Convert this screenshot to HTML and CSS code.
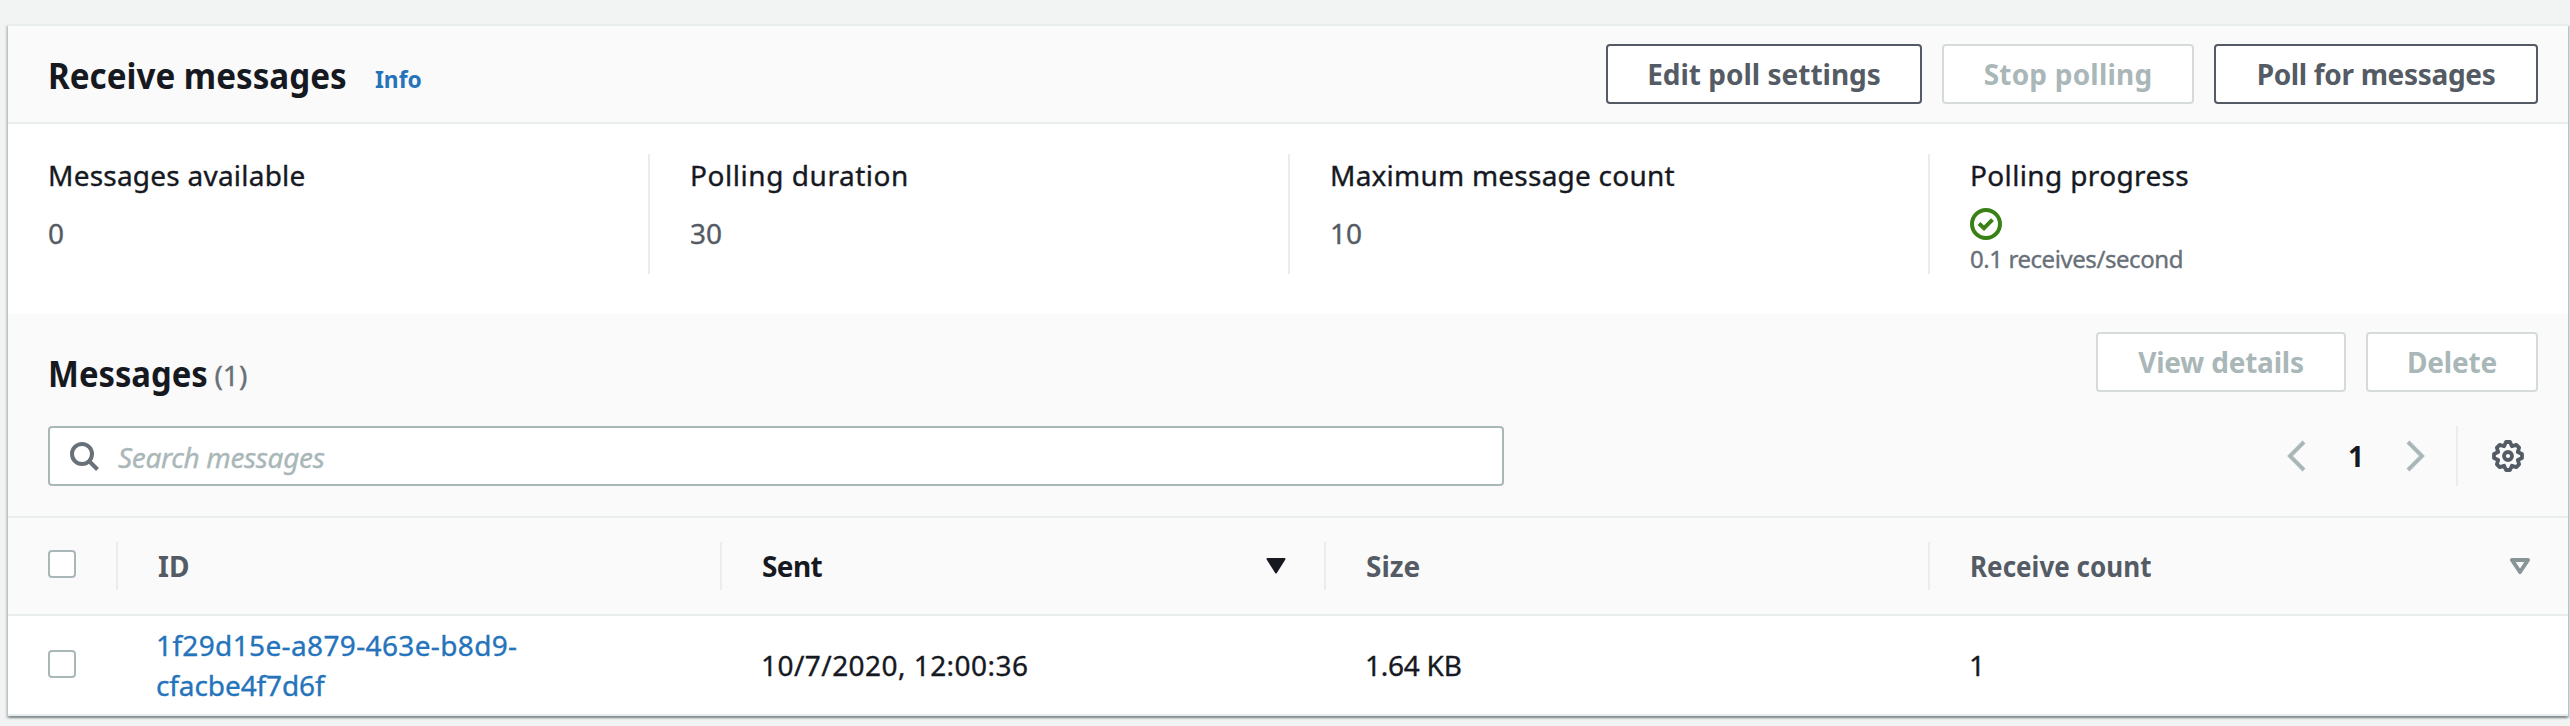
FILE: index.html
```
<!DOCTYPE html>
<html lang="en">
<head>
<meta charset="utf-8">
<title>Receive messages</title>
<link rel="stylesheet" href="styles.css">
</head>
<body>
<main class="card">
  <header class="card-header">
    <h2 class="title"><span class="t t-receive">Receive messages</span></h2>
    <a class="info"><span class="t t-info">Info</span></a>
    <div class="actions">
      <button class="btn btn-edit"><span class="t t-edit">Edit poll settings</span></button>
      <button class="btn btn-stop" disabled><span class="t t-stop">Stop polling</span></button>
      <button class="btn btn-poll"><span class="t t-poll">Poll for messages</span></button>
    </div>
  </header>
  <section class="stats">
    <div class="stat"><div class="label"><span class="t t-avail">Messages available</span></div><div class="value"><span class="t">0</span></div></div>
    <div class="stat"><div class="label"><span class="t t-dur">Polling duration</span></div><div class="value"><span class="t">30</span></div></div>
    <div class="stat"><div class="label"><span class="t t-max">Maximum message count</span></div><div class="value"><span class="t">10</span></div></div>
    <div class="stat"><div class="label"><span class="t t-prog">Polling progress</span></div>
      <svg class="ok" viewBox="0 0 32 32"><circle cx="16" cy="16" r="14" /><path d="M9 15.500l5 4.700 8.500-8.500" /></svg>
      <div class="rate"><span class="t t-rate">0.1 receives/second</span></div>
    </div>
  </section>
  <section class="tools">
    <div class="row">
      <h2 class="title"><span class="t t-messages">Messages</span></h2>
      <span class="count">(1)</span>
      <div class="actions">
        <button class="btn btn-view" disabled><span class="t t-view">View details</span></button>
        <button class="btn btn-delete" disabled><span class="t t-delete">Delete</span></button>
      </div>
    </div>
    <div class="row row-search">
      <div class="search">
        <svg class="glass" viewBox="0 0 32 32"><circle cx="12" cy="14" r="10" /><path d="M19 21l8.500 8.500" /></svg>
        <span class="t t-search">Search messages</span>
      </div>
      <div class="pager">
        <svg class="chev" viewBox="0 0 20 32"><path d="M18 2L4 16l14 14" /></svg>
        <span class="page">1</span>
        <svg class="chev" viewBox="0 0 20 32"><path d="M2 2l14 14L2 30" /></svg>
      </div>
      <div class="prefs">
        <svg class="gear" viewBox="0 0 32 32"><path d="M14 2h4L19.900 6.200 24.300 4.900 27.100 7.700 25.800 12.100 30 14v4L25.800 19.900 27.100 24.300 24.300 27.100 19.900 25.800 18 30h-4L12.100 25.800 7.700 27.100 4.900 24.300 6.200 19.900 2 18v-4L6.200 12.100 4.900 7.700 7.700 4.900 12.100 6.200z" /><circle cx="16" cy="16" r="4" /></svg>
      </div>
    </div>
  </section>
  <section class="grid head">
    <div class="cell pick"><span class="box"></span></div>
    <div class="cell"><span class="t t-id">ID</span></div>
    <div class="cell sorted"><span class="t t-sent">Sent</span><svg class="tri" viewBox="0 0 20 16"><path class="solid" d="M1.500 1h17L10 14.500z" /></svg></div>
    <div class="cell"><span class="t t-size">Size</span></div>
    <div class="cell"><span class="t t-count">Receive count</span><svg class="tri" viewBox="0 0 20 16"><path class="hollow" d="M2 2h16l-8 12z" /></svg></div>
  </section>
  <section class="grid body">
    <div class="cell pick"><span class="box"></span></div>
    <div class="cell"><a class="link"><span class="t t-id1">1f29d15e-a879-463e-b8d9-</span><br><span class="t t-id2">cfacbe4f7d6f</span></a></div>
    <div class="cell"><span class="t t-date">10/7/2020, 12:00:36</span></div>
    <div class="cell"><span class="t t-kb">1.64 KB</span></div>
    <div class="cell"><span class="t">1</span></div>
  </section>
</main>
</body>
</html>
```
FILE: styles.css
```
* { box-sizing: border-box; }
body {
  margin: 0;
  height: 726px;
  padding: 24px 2px 0 8px;
  overflow: hidden;
  background: #f2f3f3;
  color: #16191f;
  font: 28px/40px "Noto Sans", sans-serif;
}
.t { display: inline-block; white-space: nowrap; transform-origin: 0 50%; }
.label, .value, .rate, .count, .search, .body { -webkit-text-stroke: .35px currentColor; }
.t-receive { transform: scaleX(.922); margin-right: -23px; }
.t-messages { transform: scaleX(.91); margin-right: -16px; }
.t-info { transform: scaleX(.95); }
.t-count { transform: scaleX(.93); }
.t-avail, .t-max { letter-spacing: .23px; }
.t-dur { letter-spacing: .55px; }
.t-prog { letter-spacing: .36px; }
.t-rate { letter-spacing: -.43px; }
.t-stop { letter-spacing: .2px; }
.t-poll { letter-spacing: -.33px; }
.t-view { letter-spacing: -.2px; }
.t-delete { letter-spacing: -.2px; }
.t-sent { letter-spacing: -.6px; }
.t-id1 { letter-spacing: .36px; }
.t-id2 { letter-spacing: -.1px; }
.t-date { letter-spacing: .45px; }
.t-kb { letter-spacing: -.25px; }
.card {
  height: 692px;
  border-top: 2px solid #eaeded;
  border-bottom: 2px solid #eaeded;
  background: #fff;
  box-shadow: 0 2px 2px rgba(0, 28, 36, .3), 2px 2px 2px rgba(0, 28, 36, .15), -2px 2px 2px rgba(0, 28, 36, .15);
}
.card-header {
  display: flex;
  align-items: center;
  height: 98px;
  padding: 0 30px 0 40px;
  background: #fafafa;
  border-bottom: 2px solid #eaeded;
}
.title { margin: 3px 0 0; font-size: 36px; line-height: 44px; font-weight: 700; }
.info { margin: 10px 0 0 26px; font-size: 24px; line-height: 36px; font-weight: 700; color: #2574bb; }
.actions { display: flex; gap: 20px; margin-left: auto; }
.btn {
  display: flex;
  align-items: center;
  justify-content: center;
  height: 60px;
  padding: 0;
  border: 2px solid #545b64;
  border-radius: 4px;
  background: #fff;
  color: #545b64;
  font: 700 28px/40px "Noto Sans", sans-serif;
}
.btn:disabled { border-color: #d5dbdb; color: #aab7b8; }
.btn-edit { width: 316px; }
.btn-stop { width: 252px; }
.btn-poll { width: 324px; }
.btn-view { width: 250px; }
.btn-delete { width: 172px; }
.stats { display: grid; grid-template-columns: repeat(4, 640px); height: 190px; padding-top: 30px; }
.stat { height: 120px; padding: 1px 40px 0; }
.stat + .stat { border-left: 2px solid #eaeded; }
.value { margin-top: 18px; color: #545b64; }
.ok { display: block; width: 32px; height: 32px; margin-top: 13px; fill: none; stroke: #3a8016; stroke-width: 4; }
.rate { margin-top: 3px; font-size: 24px; line-height: 32px; color: #687078; }
.tools { height: 204px; padding: 18px 30px 0 40px; background: #fafafa; border-bottom: 2px solid #eaeded; }
.row { display: flex; align-items: center; height: 60px; }
.row .title { margin-top: 23px; }
.count { margin: 25px 0 0 7px; color: #687078; }
.row-search { margin-top: 34px; }
.search {
  display: flex;
  align-items: center;
  width: 1456px;
  height: 60px;
  padding-left: 20px;
  border: 2px solid #aab7b8;
  border-radius: 4px;
  background: #fff;
  color: #aab7b8;
  font-style: italic;
}
.t-search { margin-top: 2px; letter-spacing: -.35px; }
.glass { width: 32px; height: 32px; margin-right: 16px; fill: none; stroke: #687078; stroke-width: 4; }
.pager { display: flex; align-items: center; justify-content: space-between; width: 140px; margin-left: auto; }
.chev { width: 20px; height: 32px; fill: none; stroke: #aab7b8; stroke-width: 4; }
.page { font-weight: 700; }
.prefs { display: flex; align-items: center; height: 60px; margin-left: 30px; padding: 0 14px 0 34px; border-left: 2px solid #eaeded; }
.gear { width: 32px; height: 32px; fill: none; stroke: #545b64; stroke-width: 3.8; stroke-linejoin: round; }
.grid { display: grid; grid-template-columns: 108px 604px 604px 604px 640px; align-items: center; }
.cell { display: flex; align-items: center; padding: 0 38px 0 41px; }
.pick { padding: 0 0 0 40px; }
.head { height: 98px; background: #fafafa; border-bottom: 2px solid #eaeded; color: #545b64; font-weight: 700; }
.head .cell { height: 48px; }
.head .cell + .cell { padding-left: 40px; border-left: 2px solid #eaeded; }
.sorted { color: #16191f; }
.body { height: 98px; }
.box { width: 28px; height: 28px; margin-bottom: 2px; border: 2px solid #aab7b8; border-radius: 4px; background: #fff; }
.head .box { margin-bottom: 4px; }
.tri { width: 20px; height: 16px; margin-left: auto; }
.solid { fill: #16191f; stroke: #16191f; stroke-width: 2; stroke-linejoin: round; }
.hollow { fill: none; stroke: #879596; stroke-width: 4; stroke-linejoin: round; }
.link { margin-left: -1px; color: #2574bb; }
```
